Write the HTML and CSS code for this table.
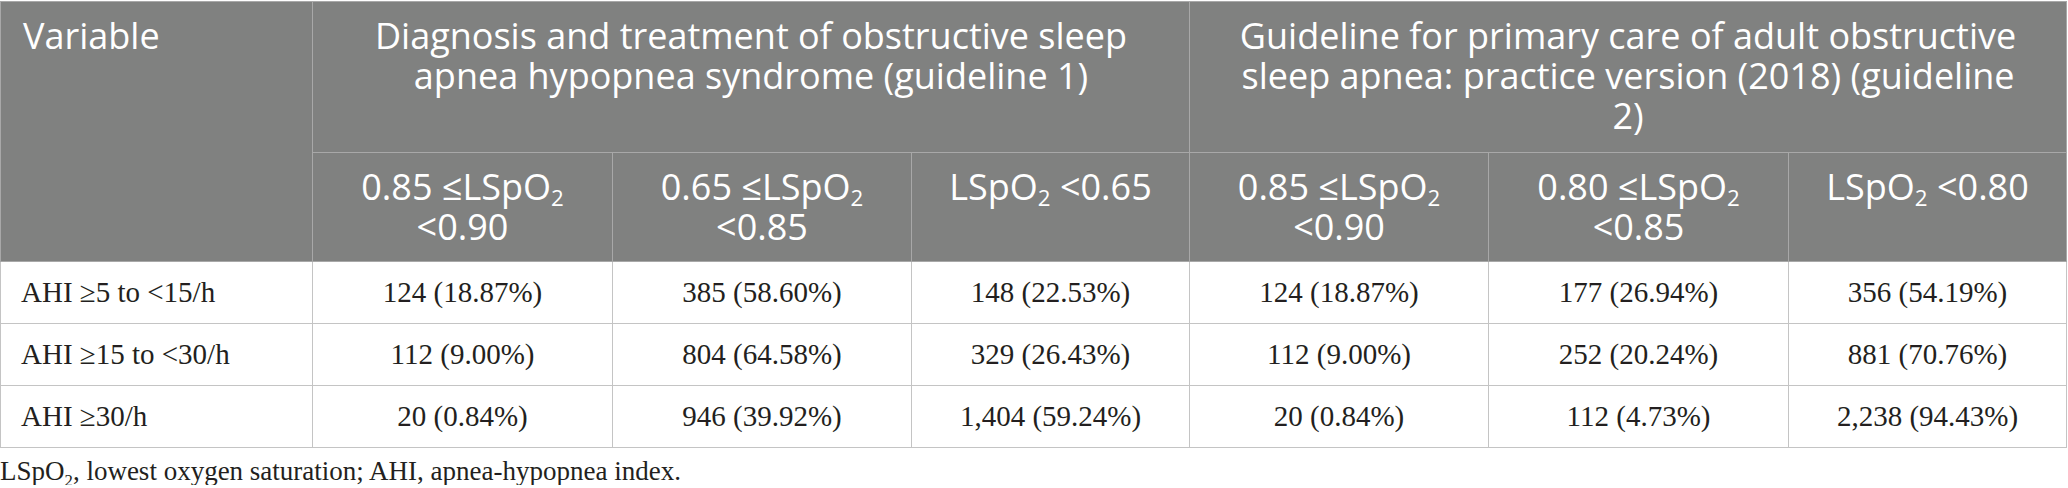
FILE: index.html
```html
<!DOCTYPE html>
<html lang="en">

<head>
  <meta charset="UTF-8" />
  <title>LSpO2 by AHI severity</title>
  <link rel="stylesheet" href="styles.css">
</head>

<body>
  <table class="data-table">
    <colgroup>
      <col class="col-var">
      <col class="col-a">
      <col class="col-b">
      <col class="col-c">
      <col class="col-b">
      <col class="col-a">
      <col class="col-c">
    </colgroup>
    <thead>
      <tr class="head-top">
        <th rowspan="2" class="var-head">Variable</th>
        <th colspan="3" class="group-head">Diagnosis and treatment of obstructive sleep apnea hypopnea syndrome (guideline 1)</th>
        <th colspan="3" class="group-head">Guideline for primary care of adult obstructive sleep apnea: practice version (2018) (guideline 2)</th>
      </tr>
      <tr class="head-sub">
        <th>0.85 ≤LSpO<sub>2</sub> &lt;0.90</th>
        <th>0.65 ≤LSpO<sub>2</sub> &lt;0.85</th>
        <th>LSpO<sub>2</sub> &lt;0.65</th>
        <th>0.85 ≤LSpO<sub>2</sub> &lt;0.90</th>
        <th>0.80 ≤LSpO<sub>2</sub> &lt;0.85</th>
        <th>LSpO<sub>2</sub> &lt;0.80</th>
      </tr>
    </thead>
    <tbody>
      <tr>
        <td>AHI ≥5 to &lt;15/h</td>
        <td>124 (18.87%)</td>
        <td>385 (58.60%)</td>
        <td>148 (22.53%)</td>
        <td>124 (18.87%)</td>
        <td>177 (26.94%)</td>
        <td>356 (54.19%)</td>
      </tr>
      <tr>
        <td>AHI ≥15 to &lt;30/h</td>
        <td>112 (9.00%)</td>
        <td>804 (64.58%)</td>
        <td>329 (26.43%)</td>
        <td>112 (9.00%)</td>
        <td>252 (20.24%)</td>
        <td>881 (70.76%)</td>
      </tr>
      <tr>
        <td>AHI ≥30/h</td>
        <td>20 (0.84%)</td>
        <td>946 (39.92%)</td>
        <td>1,404 (59.24%)</td>
        <td>20 (0.84%)</td>
        <td>112 (4.73%)</td>
        <td>2,238 (94.43%)</td>
      </tr>
    </tbody>
  </table>
  <p class="footnote">LSpO<sub>2</sub>, lowest oxygen saturation; AHI, apnea-hypopnea index.</p>
</body>

</html>
```

FILE: styles.css
```css
/* Page */
body {
  margin: 0;
  padding: 0;
  background: #ffffff;
  color: #231f20;
}

/* Table */
.data-table {
  width: 2067px;
  table-layout: fixed;
  border-collapse: collapse;
  margin-top: 1px;
}

.col-var {
  width: 312px;
}

.col-a {
  width: 300px;
}

.col-b {
  width: 299px;
}

.col-c {
  width: 278px;
}

/* Header */
.data-table th {
  background: #808180;
  color: #ffffff;
  font-family: "Open Sans", sans-serif;
  font-weight: 400;
  font-size: 36px;
  line-height: 40px;
  text-align: center;
  vertical-align: top;
  border: 1px solid #a8a8a8;
  padding: 14px 12px 0;
}

.data-table th.group-head {
  padding-left: 36px;
  padding-right: 36px;
}

.data-table th sub {
  font-size: 0.62em;
  line-height: 0;
  vertical-align: -0.25em;
}

.head-top {
  height: 151px;
}

.head-sub {
  height: 109px;
}

.data-table th.var-head {
  text-align: left;
  padding-left: 22px;
}

/* Body */
.data-table td {
  font-family: "Liberation Serif", serif;
  font-size: 29px;
  height: 61px;
  padding: 0 16px;
  text-align: center;
  vertical-align: middle;
  border: 1px solid #c4c4c4;
}

.data-table td:first-child {
  text-align: left;
  padding-left: 20px;
}

/* Footnote */
.footnote {
  margin: 9px 0 0;
  font-family: "Liberation Serif", serif;
  font-size: 27px;
  line-height: 28px;
}

.footnote sub {
  font-size: 0.62em;
  line-height: 0;
}
```
